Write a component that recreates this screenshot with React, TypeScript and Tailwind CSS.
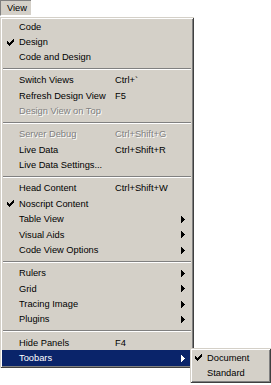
import React from "react";

type Item =
  | { sep: true }
  | { sep?: false; l: string; s?: string; d?: boolean; check?: boolean; sub?: boolean; hl?: boolean };

const items: Item[] = [
  { l: "Code" },
  { l: "Design", check: true },
  { l: "Code and Design" },
  { sep: true },
  { l: "Switch Views", s: "Ctrl+`" },
  { l: "Refresh Design View", s: "F5" },
  { l: "Design View on Top", d: true },
  { sep: true },
  { l: "Server Debug", s: "Ctrl+Shift+G", d: true },
  { l: "Live Data", s: "Ctrl+Shift+R" },
  { l: "Live Data Settings..." },
  { sep: true },
  { l: "Head Content", s: "Ctrl+Shift+W" },
  { l: "Noscript Content", check: true },
  { l: "Table View", sub: true },
  { l: "Visual Aids", sub: true },
  { l: "Code View Options", sub: true },
  { sep: true },
  { l: "Rulers", sub: true },
  { l: "Grid", sub: true },
  { l: "Tracing Image", sub: true },
  { l: "Plugins", sub: true },
  { sep: true },
  { l: "Hide Panels", s: "F4" },
  { l: "Toobars", sub: true, hl: true },
];

function Check({ color = "#000" }: { color?: string }) {
  return (
    <svg width="7" height="7" viewBox="0 0 7 7" shapeRendering="crispEdges" fill={color}>
      <rect x="6" y="0" width="1" height="1" />
      <rect x="5" y="1" width="2" height="1" />
      <rect x="0" y="2" width="1" height="1" />
      <rect x="4" y="2" width="3" height="1" />
      <rect x="0" y="3" width="2" height="1" />
      <rect x="3" y="3" width="3" height="1" />
      <rect x="0" y="4" width="5" height="1" />
      <rect x="1" y="5" width="3" height="1" />
      <rect x="2" y="6" width="1" height="1" />
    </svg>
  );
}

function Arrow({ color = "#000" }: { color?: string }) {
  return (
    <svg width="4" height="7" viewBox="0 0 4 7" shapeRendering="crispEdges" fill={color}>
      <rect x="0" y="0" width="1" height="1" />
      <rect x="0" y="1" width="2" height="1" />
      <rect x="0" y="2" width="3" height="1" />
      <rect x="0" y="3" width="4" height="1" />
      <rect x="0" y="4" width="3" height="1" />
      <rect x="0" y="5" width="2" height="1" />
      <rect x="0" y="6" width="1" height="1" />
    </svg>
  );
}

const frame =
  "shadow-[inset_1px_1px_0_#d4d0c8,inset_-1px_-1px_0_#404040,inset_2px_2px_0_#ffffff,inset_-2px_-2px_0_#808080]";

export default function App() {
  return (
    <div className="relative w-[271px] h-[385px] bg-white overflow-hidden font-['Liberation_Sans',Arial,sans-serif] text-[9.3px] text-black">
      <div className="w-[31px] h-[16px] bg-[#d4d0c8] border-l border-t border-l-[#808080] border-t-[#808080] border-b border-b-white pl-[6px] leading-[14px]">
        View
      </div>
      <div className={`mt-[1px] w-[194px] bg-[#d4d0c8] p-[2px] ${frame}`}>
        {items.map((it, i) => {
          if (it.sep) {
            return (
              <div key={i} className="h-[7.8px] flex flex-col justify-center px-[1px]">
                <div className="h-px bg-[#808080]" />
                <div className="h-px bg-white" />
              </div>
            );
          }
          const disabled = it.d;
          const txt = it.hl
            ? "text-white"
            : disabled
            ? "text-[#808080] [text-shadow:1px_1px_0_#ffffff]"
            : "text-black";
          return (
            <div
              key={i}
              className={`h-[15.4px] leading-[15.4px] flex items-center whitespace-nowrap ${
                it.hl ? "bg-[#0a246a]" : ""
              } ${txt}`}
            >
              <div className="w-[17px] pl-[5px] flex items-center">{it.check ? <Check /> : null}</div>
              <div className="w-[96px] pt-[1px]">{it.l}</div>
              <div className="flex-1 pt-[1px]">{it.s ?? ""}</div>
              <div className="w-[11px] flex items-center">
                {it.sub ? <Arrow color={it.hl ? "#ffffff" : "#000000"} /> : null}
              </div>
            </div>
          );
        })}
      </div>
      <div className={`absolute left-[190px] top-[348px] w-[81px] bg-[#d4d0c8] px-[2px] py-[2px] ${frame}`}>
        <div className="h-[15.4px] leading-[15.4px] flex items-center whitespace-nowrap">
          <div className="w-[15px] pl-[3px] flex items-center">
            <Check />
          </div>
          <div className="pt-[1px]">Document</div>
        </div>
        <div className="h-[15.4px] leading-[15.4px] flex items-center whitespace-nowrap">
          <div className="w-[15px]" />
          <div className="pt-[1px]">Standard</div>
        </div>
      </div>
    </div>
  );
}
